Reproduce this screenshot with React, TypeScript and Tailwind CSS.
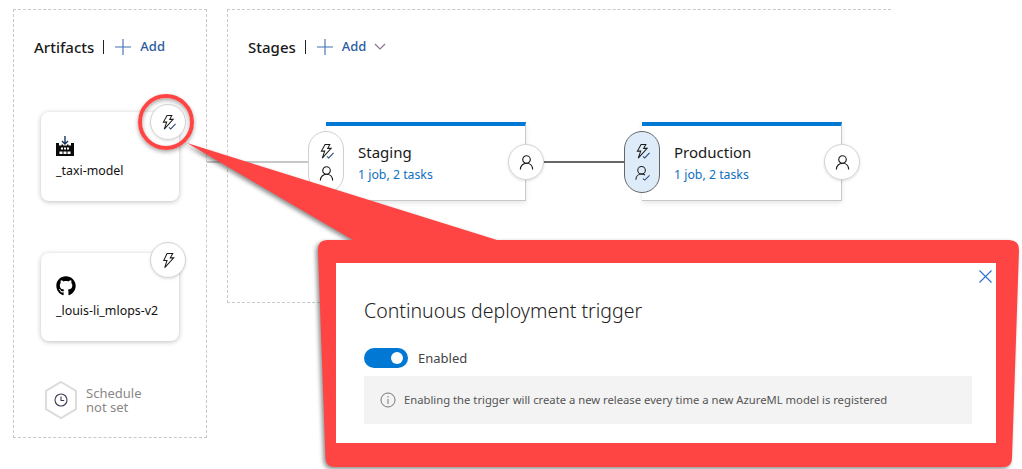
import React from "react";
import { FaGithub } from "react-icons/fa";

function ZapCheck({ className = "" }: { className?: string }) {
  return (
    <svg viewBox="0 0 18 18" className={className} fill="none" stroke="#1b1b1b" strokeWidth="1.1">
      <path d="M7.500 1.500h5l-2.200 4.200h3.600L4.500 16l2.600-7.400H3.600z" strokeLinejoin="miter" />
      <path d="M9.500 14.200l1.800 1.600L16.500 10.500" stroke="#2b4a78" />
    </svg>
  );
}

function Zap({ className = "" }: { className?: string }) {
  return (
    <svg viewBox="0 0 18 18" className={className} fill="none" stroke="#1b1b1b" strokeWidth="1.1">
      <path d="M7.500 1.500h6l-2.600 4.700h3.600L5 16.500l2.400-7.600H4z" />
    </svg>
  );
}

function Person({ className = "" }: { className?: string }) {
  return (
    <svg viewBox="0 0 18 18" className={className} fill="none" stroke="#1b1b1b" strokeWidth="1.2">
      <circle cx="9" cy="5.800" r="4" />
      <path d="M2.500 16.500c0-4 2.800-6.700 6.500-6.700s6.500 2.700 6.500 6.700" />
    </svg>
  );
}

function PersonCheck({ className = "" }: { className?: string }) {
  return (
    <svg viewBox="0 0 18 18" className={className} fill="none" stroke="#1b1b1b" strokeWidth="1.1">
      <circle cx="8" cy="5.500" r="4" />
      <path d="M2 15.500c0-3.600 2.600-6 6-6 1.400 0 2.600.4 3.600 1.100" />
      <path d="M9.500 14.400l1.800 1.600L16.500 11" stroke="#2b4a78" />
    </svg>
  );
}

function Plus() {
  return (
    <svg viewBox="0 0 16 16" className="w-4 h-4 shrink-0" fill="none" stroke="#3f6fb0" strokeWidth="1.1">
      <path d="M8 0v16M0 8h16" />
    </svg>
  );
}

function FactoryIcon() {
  return (
    <svg viewBox="0 0 18 20" className="w-[18px] h-5">
      <path d="M9 0v8M6 5l3 3 3-3" fill="none" stroke="#16335c" strokeWidth="1.4" />
      <path d="M0 20V7h3v2.500h2.500V8.500h1.500v1h4v-1h1.500v1H15V7h3v13z" fill="#0a0a0a" />
      <path d="M5 11.500h2v2H5zM8 11.500h2v2H8zM11 11.500h2v2h-2z" fill="#fff" />
      <path d="M3.500 15.500h3v2.500h-3zM7.500 15.500h3v2.500h-3zM11.500 15.500h3v2.500h-3z" fill="#fff" />
    </svg>
  );
}

function Badge({ children, className = "" }: { children: React.ReactNode; className?: string }) {
  return (
    <div className={`absolute flex items-center justify-center w-9 h-9 rounded-full bg-white border border-[#d4d4d4] shadow-[0_1px_3px_rgba(0,0,0,0.12)] ${className}`}>
      {children}
    </div>
  );
}

function ArtifactCard({ icon, name, badge, className = "" }: { icon: React.ReactNode; name: string; badge: React.ReactNode; className?: string }) {
  return (
    <div className={`relative w-[138px] rounded-lg bg-white shadow-[0_1px_5px_rgba(0,0,0,0.25)] pl-[15px] ${className}`}>
      {icon}
      <p className="text-[12.4px] leading-4 mt-[7px] text-[#111]">{name}</p>
      {badge}
    </div>
  );
}

function StageCard({ title, pill, dark }: { title: string; pill: React.ReactNode; dark?: boolean }) {
  return (
    <div className="relative w-[200px] h-[79px] shrink-0 bg-white border-t-4 border-t-[#0078d4] border-r border-b border-r-[#c8c8c8] border-b-[#c8c8c8] shadow-[0_2px_5px_rgba(0,0,0,0.1)] pl-8 pt-4">
      <p className="text-[15px] leading-5 text-[#1a1a1a]">{title}</p>
      <p className="text-[12.300px] leading-4 mt-[5px] text-[#106ebe]">1 job, 2 tasks</p>
      <div className={`absolute left-[-18px] top-[5px] w-9 h-[62px] rounded-[18px] flex flex-col items-center justify-center gap-[5px] ${dark ? "bg-[#deecf9] border border-[#666]" : "bg-white border border-[#d0d0d0]"}`}>
        {pill}
      </div>
      <Badge className="right-[-19px] top-[18px]">
        <Person className="w-[17px] h-[17px]" />
      </Badge>
    </div>
  );
}

export default function App() {
  return (
    <div className="relative w-[1022px] h-[469px] overflow-hidden bg-white font-['Noto_Sans',sans-serif]">
      <div className="flex items-start gap-5 pl-[13px] pt-[9px]">
        {/* Artifacts */}
        <section className="w-[194px] h-[429px] shrink-0 border border-dashed border-[#c8c8c8] pl-[27px]">
          <div className="flex items-center h-5 mt-[27px] -ml-[7px]">
            <h2 className="text-[15px] font-medium text-[#1a1a1a] leading-5">Artifacts</h2>
            <span className="w-px h-[14px] bg-[#222] ml-[9px] mr-[11px]" />
            <Plus />
            <span className="ml-[9px] text-[13px] font-medium text-[#2b5c9e]">Add</span>
          </div>
          <ArtifactCard
            className="h-[89px] mt-[55px] pt-[24px]"
            icon={<FactoryIcon />}
            name="_taxi-model"
            badge={
              <Badge className="left-[109px] top-[-8px]">
                <ZapCheck className="w-[17px] h-[17px]" />
              </Badge>
            }
          />
          <ArtifactCard
            className="h-[88px] mt-[52px] pt-[23px]"
            icon={<FaGithub className="w-5 h-5 text-black" />}
            name="_louis-li_mlops-v2"
            badge={
              <Badge className="left-[109px] top-[-11px]">
                <Zap className="w-[17px] h-[17px]" />
              </Badge>
            }
          />
          <div className="flex items-center gap-[8px] mt-[39px] ml-[3px]">
            <svg viewBox="0 0 34 40" className="w-[34px] h-10 shrink-0">
              <path d="M17 2l15 8.800v18.400L17 38 2 29.200V10.800z" fill="#fff" stroke="#dcdcdc" strokeWidth="2" />
              <circle cx="17" cy="20" r="6" fill="none" stroke="#3b3b5a" strokeWidth="1.1" />
              <path d="M17 16.500V20.500h3.200" fill="none" stroke="#3b3b5a" strokeWidth="1.1" />
            </svg>
            <p className="text-[13px] leading-[14px] text-[#8a8886]">Schedule<br />not set</p>
          </div>
        </section>

        {/* Stages */}
        <section className="relative w-[664px] h-[294px] shrink-0 border-l border-t border-b border-dashed border-[#c8c8c8]">
          <div className="absolute left-[-21px] top-[151px] w-[102px] h-[2px] bg-[#c8c8c8]" />
          <div className="flex items-center h-5 mt-[27px] ml-5">
            <h2 className="text-[15px] font-medium text-[#1a1a1a] leading-5">Stages</h2>
            <span className="w-px h-[14px] bg-[#222] ml-[9px] mr-[11px]" />
            <Plus />
            <span className="ml-[9px] text-[13px] font-medium text-[#2b5c9e]">Add</span>
            <svg viewBox="0 0 12 8" className="w-3 h-2 ml-[8px]" fill="none" stroke="#8a6f8a" strokeWidth="1.1">
              <path d="M1 1l5 5 5-5" />
            </svg>
          </div>
          <div className="flex items-center mt-[65px] ml-[98px]">
            <StageCard
              title="Staging"
              pill={
                <>
                  <ZapCheck className="w-[17px] h-[17px]" />
                  <Person className="w-[17px] h-[17px]" />
                </>
              }
            />
            <div className="w-[116px] h-[2px] shrink-0 bg-[#666]" />
            <StageCard
              title="Production"
              dark
              pill={
                <>
                  <ZapCheck className="w-[17px] h-[17px]" />
                  <PersonCheck className="w-[17px] h-[17px]" />
                </>
              }
            />
          </div>
        </section>
      </div>

      {/* Red highlight ring */}
      <div className="absolute left-[138px] top-[94px] w-14 h-14 rounded-full border-4 border-[#ff4444] shadow-[0_2px_4px_rgba(0,0,0,0.35),inset_0_2px_4px_rgba(0,0,0,0.35)]" />

      {/* Red callout */}
      <svg viewBox="0 0 1022 469" className="absolute inset-0 w-[1022px] h-[469px] drop-shadow-[-2px_2px_2px_rgba(0,0,0,0.45)]">
        <path
          d="M187 143L353 240H497zM327 240H1009Q1019 240 1019 250L1012 458Q1012 467 1003 467H335Q326 467 325.500 458L318 250Q318 240 327 240z"
          fill="#ff4444"
        />
      </svg>

      {/* Dialog */}
      <div className="absolute left-[336px] top-[263px] w-[660px] h-[180px] bg-white pl-7 pr-6 pt-[34px]">
        <button className="absolute right-[5px] top-[7px] w-3 h-3">
          <svg viewBox="0 0 13 13" className="w-[13px] h-[13px]" fill="none" stroke="#2b6fd0" strokeWidth="1.1">
            <path d="M0.500 0.500l12 12M12.500 0.500l-12 12" />
          </svg>
        </button>
        <h3 className="text-[19.500px] font-light leading-7 text-[#222]">Continuous deployment trigger</h3>
        <div className="flex items-center gap-[10px] mt-[23px]">
          <div className="w-11 h-5 rounded-full bg-[#0078d4] flex items-center justify-end pr-[5px]">
            <span className="w-3 h-3 rounded-full bg-white" />
          </div>
          <span className="text-[13px] leading-5 text-[#444]">Enabled</span>
        </div>
        <div className="flex items-center gap-[8px] h-12 mt-2 pl-4 bg-[#f3f3f3]">
          <svg viewBox="0 0 16 16" className="w-4 h-4 shrink-0" fill="none" stroke="#777" strokeWidth="1">
            <circle cx="8" cy="8" r="7" />
            <path d="M8 7v5M8 4v1.500" />
          </svg>
          <span className="text-[11.250px] leading-4 text-[#555]">Enabling the trigger will create a new release every time a new AzureML model is registered</span>
        </div>
      </div>
    </div>
  );
}
